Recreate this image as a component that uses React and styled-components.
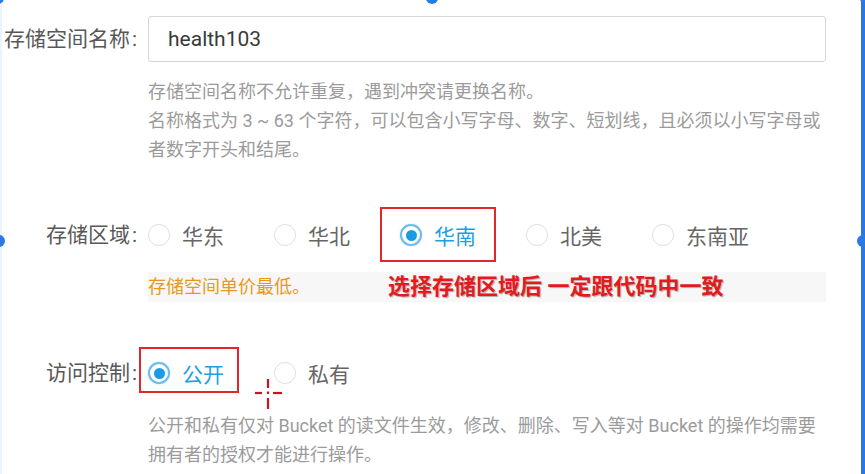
import React from 'react'
import styled, { createGlobalStyle } from 'styled-components'

const GlobalStyle = createGlobalStyle`
    body {
        margin: 0;
        background: #ffffff;
        font-family: Roboto, "Noto Sans CJK SC", sans-serif;
    }
`

const Page = styled.div`
    position: relative;
    width: 865px;
    height: 474px;
    overflow: hidden;
    background: #ffffff;
`

const Form = styled.div`
    padding-top: 16px;
    width: 826px;
`

const FormItem = styled.div`
    display: grid;
    grid-template-columns: 148px 678px;
    margin-top: ${p => p.$gap || 0}px;
`

const Label = styled.div`
    box-sizing: border-box;
    height: 46px;
    line-height: 46px;
    padding-right: 11px;
    text-align: right;
    font-size: 21px;
    color: #585858;
    white-space: nowrap;
`

const Colon = styled.span`
    margin-left: 2px;
`

const Input = styled.input`
    box-sizing: border-box;
    width: 100%;
    height: 46px;
    padding: 0 19px;
    border: 1px solid #d6d6d6;
    border-radius: 3px;
    font-family: Roboto, "Noto Sans CJK SC", sans-serif;
    font-size: 21px;
    color: #3a3a3a;
    outline: none;
    background: #fff;
`

const Help = styled.div`
    grid-column: 2;
    margin-top: 15px;
    font-size: 18px;
    line-height: 29px;
    color: #9b9b9b;
    white-space: nowrap;
`

const Notice = styled.div`
    position: relative;
    grid-column: 2;
    margin-top: 14px;
    height: 30px;
    line-height: 30px;
    background: #f7f7f7;
    font-size: 18px;
    color: #e69a1c;
`

const Annotation = styled.span`
    position: absolute;
    left: 240px;
    top: 0;
    font-size: 22px;
    font-weight: 700;
    color: #e31b1f;
    text-shadow: 1px 1px 1px rgba(0, 0, 0, 0.3);
    white-space: nowrap;
`

const RadioGroup = styled.div`
    display: flex;
    align-items: center;
    height: 46px;
`

const Option = styled.label`
    position: relative;
    display: inline-flex;
    align-items: center;
    gap: 12px;
    height: 46px;
    margin-right: 50px;
    font-size: 21px;
    color: ${p => (p.$checked ? '#1e9fe2' : '#666666')};
    white-space: nowrap;
`

const Circle = styled.span`
    box-sizing: border-box;
    display: inline-flex;
    align-items: center;
    justify-content: center;
    width: 22px;
    height: 22px;
    border-radius: 50%;
    border: ${p => (p.$checked ? '2px solid #6cbcec' : '1px solid #e3e3e3')};
    box-shadow: ${p => (p.$checked ? '0 0 2px rgba(30,159,226,0.35)' : '0 0 1px rgba(0,0,0,0.06)')};
    background: #fff;

    &::after {
        content: '';
        display: ${p => (p.$checked ? 'block' : 'none')};
        width: 11px;
        height: 11px;
        border-radius: 50%;
        background: #1a9be3;
    }
`

const Mark = styled.span`
    position: absolute;
    top: ${p => p.$t}px;
    left: ${p => p.$l}px;
    right: ${p => p.$r}px;
    bottom: ${p => p.$b}px;
    border: 2px solid #e3262b;
    pointer-events: none;
`

const Cursor = styled.svg`
    position: absolute;
    left: 254px;
    top: 378px;
`

const FrameEdge = styled.div`
    position: absolute;
    top: 0;
    bottom: 0;
    left: ${p => p.$left}px;
    width: ${p => p.$w}px;
    background: ${p => p.$color};
`

const Handle = styled.span`
    position: absolute;
    left: ${p => p.$x - 6}px;
    top: ${p => p.$y - 6}px;
    width: 12px;
    height: 12px;
    border-radius: 50%;
    background: #2a7ae6;
`

const regions = ['华东', '华北', '华南', '北美', '东南亚']

const Radio = ({ text, checked, mark }) => (
    <Option $checked={checked}>
        <Circle $checked={checked} />
        {text}
        {mark ? <Mark $t={mark[0]} $r={mark[1]} $b={mark[2]} $l={mark[3]} /> : null}
    </Option>
)

const App = () => {
    return (
        <Page>
            <GlobalStyle />
            <Form>
                <FormItem>
                    <Label>存储空间名称<Colon>:</Colon></Label>
                    <Input defaultValue="health103" />
                    <Help>
                        存储空间名称不允许重复，遇到冲突请更换名称。<br />
                        名称格式为 3 ~ 63 个字符，可以包含小写字母、数字、短划线，且必须以小写字母或<br />
                        者数字开头和结尾。
                    </Help>
                </FormItem>

                <FormItem $gap={48}>
                    <Label>存储区域<Colon>:</Colon></Label>
                    <RadioGroup>
                        {regions.map(r => (
                            <Radio
                                key={r}
                                text={r}
                                checked={r === '华南'}
                                mark={r === '华南' ? [-5, -20, -4, -20] : null}
                            />
                        ))}
                    </RadioGroup>
                    <Notice>
                        存储空间单价最低。
                        <Annotation>选择存储区域后 一定跟代码中一致</Annotation>
                    </Notice>
                </FormItem>

                <FormItem $gap={48}>
                    <Label>访问控制<Colon>:</Colon></Label>
                    <RadioGroup>
                        <Radio text="公开" checked mark={[-3, -15, 3, -9]} />
                        <Radio text="私有" />
                    </RadioGroup>
                    <Help>
                        公开和私有仅对 Bucket 的读文件生效，修改、删除、写入等对 Bucket 的操作均需要<br />
                        拥有者的授权才能进行操作。
                    </Help>
                </FormItem>
            </Form>

            <Cursor width="30" height="32" viewBox="0 0 30 32">
                <g stroke="#c8141e" strokeWidth="2.2">
                    <line x1="14" y1="1" x2="14" y2="10" />
                    <line x1="14" y1="20" x2="14" y2="31" />
                    <line x1="1" y1="15" x2="8" y2="15" />
                    <line x1="19" y1="15" x2="28" y2="15" />
                    <line x1="14" y1="13.5" x2="14" y2="16" />
                </g>
            </Cursor>

            <FrameEdge $left={0} $w={2} $color="#e9f4fd" />
            <FrameEdge $left={861} $w={4} $color="#2a78e4" />
            <Handle $x={-1} $y={241} />
            <Handle $x={863} $y={241} />
            <Handle $x={432} $y={-2} />
            <Handle $x={-2} $y={-2} />
            <Handle $x={866} $y={-2} />
        </Page>
    )
}

export default App
